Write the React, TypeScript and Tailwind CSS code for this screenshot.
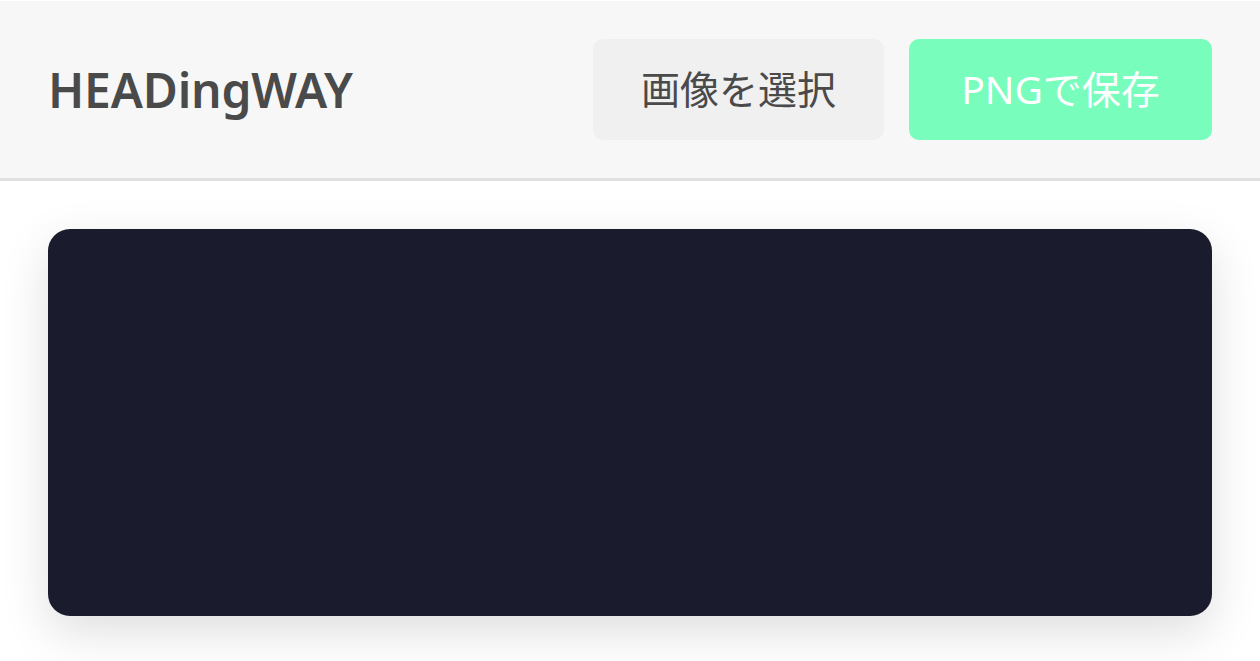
export default function App() {
  return (
    <div className="min-h-[661px] bg-white font-['Noto_Sans','Noto_Sans_CJK_JP',sans-serif]">
      <header className="mt-px flex h-[180px] items-center justify-between border-b-[3px] border-[#e0e0e0] bg-[#f7f7f7] px-12">
        <h1 className="text-[48px] font-semibold tracking-[-0.2px] text-[#4a4a4a]">HEADingWAY</h1>
        <div className="flex gap-[25px]">
          <button className="h-[101px] w-[291px] rounded-[10px] bg-[#f0f0f0] text-[39px] text-[#4a4a4a]">
            画像を選択
          </button>
          <button className="h-[101px] w-[303px] rounded-[10px] bg-[#79fdbd] text-[39px] text-white">
            PNGで保存
          </button>
        </div>
      </header>
      <main className="px-12 pt-[48px]">
        <div className="h-[387px] rounded-[22px] bg-[#1a1b2d] shadow-[0_16px_48px_rgba(0,0,0,0.13)]" />
      </main>
    </div>
  );
}
